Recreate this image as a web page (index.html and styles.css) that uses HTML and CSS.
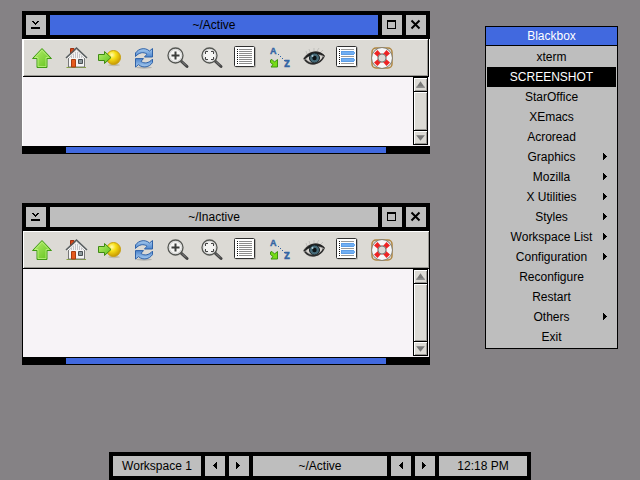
FILE: index.html
```
<!DOCTYPE html>
<html lang="en">
<head>
<meta charset="utf-8">
<title>Blackbox</title>
<link rel="stylesheet" href="styles.css">
</head>
<body>
<svg class="defs" aria-hidden="true">
  <defs>
    <linearGradient id="green" x1="0" y1="0" x2="1" y2="1"><stop offset="0" stop-color="#b8f070"/><stop offset="1" stop-color="#5ec018"/></linearGradient>
    <radialGradient id="gold" cx=".38" cy=".32" r=".7"><stop offset="0" stop-color="#fffbb0"/><stop offset=".4" stop-color="#f8e018"/><stop offset="1" stop-color="#c89800"/></radialGradient>
    <linearGradient id="blue" x1="0" y1="0" x2="0" y2="1"><stop offset="0" stop-color="#a8ccf0"/><stop offset="1" stop-color="#4c84cc"/></linearGradient>
    <symbol id="up" viewBox="0 0 22 22">
      <path d="M11 1.5 20.5 11.5H16V20.5H6V11.5H1.5Z" fill="url(#green)" stroke="#3f9a14" stroke-linejoin="round"/>
      <path d="M11 3.2 17.9 10.5H15V19.5H7V10.5H4Z" fill="none" stroke="#c4f58c" stroke-opacity=".7"/>
    </symbol>
    <symbol id="home" viewBox="0 0 22 22">
      <path d="M1.5 20.5H21" stroke="#8aa83c"/>
      <path d="M5.5 7V1.5H9V5" fill="#d84818" stroke="#a03010"/>
      <path d="M3.5 11 11.5 2.5 19.5 11V20H3.5Z" fill="#f4f4f4" stroke="#777"/>
      <path d="M6.5 9V11M8.5 7V11M10.5 5V11M12.5 5V11M14.5 7V11M16.5 9V11" stroke="#c4c4c8"/>
      <path d="M1 11 11.5 1 22 11" fill="none" stroke="#555b5e" stroke-width="1.5"/>
      <path d="M2.5 11.5 11.5 3 20.5 11.5" fill="none" stroke="#fff"/>
      <path d="M6.5 12.5H10.5V20H6.5Z" fill="#e65a1c" stroke="#a83c10"/>
      <path d="M13.5 12.5H17.5V16.5H13.5Z" fill="#8f9a9e" stroke="#4a5054"/>
    </symbol>
    <symbol id="goto" viewBox="0 0 22 22">
      <ellipse cx="15" cy="18" rx="6" ry="1.2" fill="#c0bcaa"/>
      <circle cx="14.5" cy="10.5" r="7" fill="url(#gold)" stroke="#c8a010"/>
      <path d="M-.5 7.500H5.500V4.500L12 10.500 5.500 16.500V13.500H-.5Z" fill="url(#green)" stroke="#3f8a14"/>
    </symbol>
    <symbol id="reload" viewBox="0 0 22 22">
      <ellipse cx="11" cy="20.500" rx="8" ry="1.200" fill="#b4b3af"/>
      <path id="sweep" d="M2.500 9.500V6C5.500 1.500 12 0 16.500 4L19.500 1.500V10H11.500L14 7.200C10.500 4.500 6 5.500 2.500 9.500Z" fill="url(#blue)" stroke="#2f62a8" stroke-linejoin="round"/>
      <use href="#sweep" transform="rotate(180 11 10.800)"/>
    </symbol>
    <symbol id="glass" viewBox="0 0 22 22">
      <path d="M13.500 13.500 20 19.500" stroke="#444" stroke-width="3" stroke-linecap="round"/>
      <path d="M15 14.500 19 18.500" stroke="#888"/>
      <circle cx="8.500" cy="8.500" r="7.500" fill="#f5f5f3" stroke="#555753" stroke-width="1.300"/>
      <circle cx="8.500" cy="8.500" r="6" fill="none" stroke="#ccc" stroke-width=".8"/>
    </symbol>
    <symbol id="zoom" viewBox="0 0 22 22">
      <use href="#glass" width="22" height="22"/>
      <path d="M8.500 4.500V12.500M4.500 8.500H12.500" stroke="#3c3e3c" stroke-width="2"/>
    </symbol>
    <symbol id="fit" viewBox="0 0 22 22">
      <use href="#glass" width="22" height="22"/>
      <path d="M4.500 7V4.500H7M10 4.500H12.500V7M12.500 10V12.500H10M7 12.500H4.500V10" fill="none" stroke="#444"/>
    </symbol>
    <symbol id="sheet" viewBox="0 0 22 22">
      <rect x="1.500" y="1" width="20.500" height="20.500" rx="1" fill="#b2b0ac"/>
      <rect x=".5" y=".5" width="20" height="20" rx="1" fill="#fff" stroke="#303030"/>
      <path d="M3.500 3V18" stroke="#111" stroke-dasharray="1 1"/>
    </symbol>
    <symbol id="list" viewBox="1 1 22 22">
      <use href="#sheet" width="22" height="22"/>
      <path d="M5 3.500H18M5 5.500H18M5 7.500H18M5 9.500H18M5 11.500H18M5 13.500H18M5 15.500H18M5 17.500H18" stroke="#8c8c8c"/>
    </symbol>
    <symbol id="details" viewBox="1 1 22 22">
      <use href="#sheet" width="22" height="22"/>
      <path d="M5 3.500H18M5 10.500H18M5 17.500H18" stroke="#999"/>
      <path d="M5 7H18M5 14H18" stroke="#5c9ee8" stroke-width="4"/>
      <path d="M6 7H19M6 14H19" stroke="#72aff2" stroke-width="2"/>
    </symbol>
    <symbol id="sort" viewBox="0 0 22 22">
      <text x="1" y="7" class="letter">A</text>
      <text x="15" y="20" class="letter last">z</text>
      <path d="M9 7.500H10M11 9.500H12M13 11.500H14M15 13.500H16" stroke="#3465a4"/>
      <path d="M1.500 13 3 12.500 5.500 15 8.500 12.500V20H2L4 17.500 1.500 15.500Z" fill="#78dc18" stroke="#3f9410"/>
    </symbol>
    <symbol id="eye" viewBox="0 0 22 22">
      <path d="M4 7 3 4M7 5 6 2M11 4V1M14 4 16 1M17 6 20 3" stroke="#c0bfbb"/>
      <path d="M0 12C4 4 16 1 22 9C20 16 8 22 2 14Z" fill="#888684"/>
      <path d="M1 12C5 5 15 2 21.500 9C18 5.500 8 6.500 1 12Z" fill="#181818" stroke="#222"/>
      <path d="M3 12C7 7 16 6 20 10C17 16 8 18 3 12Z" fill="#d8d5d1"/>
      <circle cx="11.500" cy="11" r="5" fill="#456a78" stroke="#152024"/>
      <circle cx="11.500" cy="11" r="2.200" fill="#0b1114"/>
      <circle cx="9.500" cy="9" r="1" fill="#b8d0d8"/>
      <path d="M2 13C8 19.500 17 17 20.500 10" fill="none" stroke="#292929" stroke-width="1.400"/>
    </symbol>
    <symbol id="help" viewBox="0 0 22 22">
      <rect x="1" y="1" width="20" height="20" rx="4" fill="none" stroke="#af8640" stroke-width="1.500"/>
      <circle cx="11" cy="11" r="7.200" fill="none" stroke="#7c7c78" stroke-width="7"/>
      <circle cx="11" cy="11" r="7.200" fill="none" stroke="#f7f7f7" stroke-width="5.500"/>
      <path d="M3 6.500 6.500 3 10 7 7 10ZM15.500 3 19 6.500 15 10 12 7ZM19 15.500 15.500 19 12 15 15 12ZM6.500 19 3 15.500 7 12 10 15Z" fill="#ee2424"/>
      <circle cx="11" cy="11" r="4" fill="#dcdad5" stroke="#7c7c78"/>
    </symbol>
    <symbol id="iconify" viewBox="0 0 20 20"><path d="M6 6H8V7H9V8H10V7H11V6H13V7H12V8H11V9H10V10H9V9H8V8H7V7H6ZM5 12H14V14H5Z"/></symbol>
    <symbol id="maximize" viewBox="0 0 20 20"><path fill-rule="evenodd" d="M5 5H14V14H5ZM6 7V13H13V7Z"/></symbol>
    <symbol id="close" viewBox="0 0 20 20"><path d="M5.500 5.500 13.500 13.500M13.500 5.500 5.500 13.500" stroke="#000" stroke-width="2"/></symbol>
    <symbol id="left" viewBox="0 0 20 20"><path d="M8 9H9V8H10V7H11V6H12V13H11V12H10V11H9V10H8Z"/></symbol>
    <symbol id="right" viewBox="0 0 20 20"><path d="M7 6H8V7H9V8H10V9H11V10H10V11H9V12H8V13H7Z"/></symbol>
    <symbol id="scroll-up" viewBox="0 0 12 12"><path d="M6 3 9.500 8H2.500Z" fill="#777"/><path d="M2 8.500H10" stroke="#777"/></symbol>
    <symbol id="scroll-down" viewBox="0 0 12 12"><path d="M2 4H10L6 9Z" fill="#777"/></symbol>
  </defs>
</svg>

<main class="desktop">
  <section class="window active" aria-label="Active window">
    <header class="bar">
      <button class="cell knob" aria-label="Iconify"><svg><use href="#iconify"/></svg></button>
      <h2 class="cell caption">~/Active</h2>
      <button class="cell knob" aria-label="Maximize"><svg><use href="#maximize"/></svg></button>
      <button class="cell knob" aria-label="Close"><svg><use href="#close"/></svg></button>
    </header>
    <div class="client">
      <nav class="tools" aria-label="Tools">
        <button class="tool" aria-label="Up"><svg><use href="#up"/></svg></button>
        <button class="tool" aria-label="Home"><svg><use href="#home"/></svg></button>
        <button class="tool" aria-label="Go to"><svg><use href="#goto"/></svg></button>
        <button class="tool" aria-label="Refresh"><svg><use href="#reload"/></svg></button>
        <button class="tool" aria-label="Zoom in"><svg><use href="#zoom"/></svg></button>
        <button class="tool" aria-label="Zoom to fit"><svg><use href="#fit"/></svg></button>
        <button class="tool" aria-label="List"><svg><use href="#list"/></svg></button>
        <button class="tool" aria-label="Sort"><svg><use href="#sort"/></svg></button>
        <button class="tool" aria-label="Hidden files"><svg><use href="#eye"/></svg></button>
        <button class="tool" aria-label="Details"><svg><use href="#details"/></svg></button>
        <button class="tool" aria-label="Help"><svg><use href="#help"/></svg></button>
      </nav>
      <div class="view">
        <div class="page"></div>
        <div class="scroll">
          <button class="step" aria-label="Scroll up"><svg><use href="#scroll-up"/></svg></button>
          <div class="thumb"></div>
          <button class="step" aria-label="Scroll down"><svg><use href="#scroll-down"/></svg></button>
        </div>
      </div>
    </div>
    <footer class="handle"><span class="grip"></span></footer>
  </section>

  <section class="window inactive" aria-label="Inactive window">
    <header class="bar">
      <button class="cell knob" aria-label="Iconify"><svg><use href="#iconify"/></svg></button>
      <h2 class="cell caption">~/Inactive</h2>
      <button class="cell knob" aria-label="Maximize"><svg><use href="#maximize"/></svg></button>
      <button class="cell knob" aria-label="Close"><svg><use href="#close"/></svg></button>
    </header>
    <div class="client">
      <nav class="tools" aria-label="Tools">
        <button class="tool" aria-label="Up"><svg><use href="#up"/></svg></button>
        <button class="tool" aria-label="Home"><svg><use href="#home"/></svg></button>
        <button class="tool" aria-label="Go to"><svg><use href="#goto"/></svg></button>
        <button class="tool" aria-label="Refresh"><svg><use href="#reload"/></svg></button>
        <button class="tool" aria-label="Zoom in"><svg><use href="#zoom"/></svg></button>
        <button class="tool" aria-label="Zoom to fit"><svg><use href="#fit"/></svg></button>
        <button class="tool" aria-label="List"><svg><use href="#list"/></svg></button>
        <button class="tool" aria-label="Sort"><svg><use href="#sort"/></svg></button>
        <button class="tool" aria-label="Hidden files"><svg><use href="#eye"/></svg></button>
        <button class="tool" aria-label="Details"><svg><use href="#details"/></svg></button>
        <button class="tool" aria-label="Help"><svg><use href="#help"/></svg></button>
      </nav>
      <div class="view">
        <div class="page"></div>
        <div class="scroll">
          <button class="step" aria-label="Scroll up"><svg><use href="#scroll-up"/></svg></button>
          <div class="thumb"></div>
          <button class="step" aria-label="Scroll down"><svg><use href="#scroll-down"/></svg></button>
        </div>
      </div>
    </div>
    <footer class="handle"><span class="grip"></span></footer>
  </section>

  <nav class="menu" aria-label="Root menu">
    <h2 class="menu-title">Blackbox</h2>
    <div class="items">
      <button class="item">xterm</button>
      <button class="item selected">SCREENSHOT</button>
      <button class="item">StarOffice</button>
      <button class="item">XEmacs</button>
      <button class="item">Acroread</button>
      <button class="item sub">Graphics<svg><use href="#right"/></svg></button>
      <button class="item sub">Mozilla<svg><use href="#right"/></svg></button>
      <button class="item sub">X Utilities<svg><use href="#right"/></svg></button>
      <button class="item sub">Styles<svg><use href="#right"/></svg></button>
      <button class="item sub">Workspace List<svg><use href="#right"/></svg></button>
      <button class="item sub">Configuration<svg><use href="#right"/></svg></button>
      <button class="item">Reconfigure</button>
      <button class="item">Restart</button>
      <button class="item sub">Others<svg><use href="#right"/></svg></button>
      <button class="item">Exit</button>
    </div>
  </nav>

  <footer class="bar taskbar">
    <span class="cell label">Workspace 1</span>
    <button class="cell knob" aria-label="Previous workspace"><svg><use href="#left"/></svg></button>
    <button class="cell knob" aria-label="Next workspace"><svg><use href="#right"/></svg></button>
    <span class="cell caption">~/Active</span>
    <button class="cell knob" aria-label="Previous window"><svg><use href="#left"/></svg></button>
    <button class="cell knob" aria-label="Next window"><svg><use href="#right"/></svg></button>
    <span class="cell label">12:18 PM</span>
  </footer>
</main>
</body>
</html>
```
FILE: styles.css
```
* { box-sizing: border-box; }

body, h2 { margin: 0; }

body, button {
  font: 12px/20px "Liberation Sans", Arial, sans-serif;
  color: #000;
}

button { border: 0; padding: 0; }

svg { display: block; width: 100%; height: 100%; }
svg, symbol { overflow: visible; }

.defs { position: absolute; width: 0; height: 0; }

.letter { font: bold 9px "Liberation Sans", Arial, sans-serif; fill: #3465a4; stroke: #3465a4; stroke-width: .4; }
.last { font-size: 12px; }

.desktop {
  position: relative;
  min-height: 100vh;
  overflow: hidden;
  background: #858285;
}

/* Title bars and the workspace toolbar share one frame */
.bar { display: flex; gap: 4px; padding: 4px; background: #000; }
.cell { height: 20px; background: #bebebe; font-size: 12px; font-weight: 400; line-height: 20px; text-align: center; }
.knob { flex: none; width: 20px; }
.caption { flex: 1; }
.label { flex: none; width: 88px; }
.active .caption { background: #4169df; }

/* Windows */
.window { position: absolute; left: 22px; width: 408px; }
.active { top: 11px; }
.inactive { top: 203px; }

.client { border: solid #fff; border-width: 0 1px; }
.inactive .client { border-color: #000; }

.tools {
  display: flex;
  gap: 12px;
  height: 38px;
  padding: 8px;
  border: solid #000;
  border-width: 0 1px 1px 0;
  background: #dcdad5;
  box-shadow: inset 1px 1px #fff, inset -1px -1px #9a9894;
}
.inactive .tools { border-right-width: 0; }
.tool { flex: none; width: 22px; height: 22px; background: none; }

.view { display: flex; height: 69px; background: #f7f3f7; }
.inactive .view { height: 88px; }
.page { flex: 1; }

.scroll {
  display: flex;
  flex-direction: column;
  gap: 1px;
  width: 15px;
  margin: 0 1px 1px 0;
  padding: 1px;
  background: #000;
}
.step, .thumb { background: #dcdad5; box-shadow: inset 1px 1px #fff, inset -1px -1px #9a9894; }
.step { flex: none; height: 13px; }
.thumb { flex: 1; }

.handle { padding: 1px 44px; background: #000; }
.grip { display: block; height: 6px; background: #4169df; }

/* Root menu */
.menu {
  position: absolute;
  top: 26px;
  left: 485px;
  width: 133px;
  border: 1px solid #000;
  background: #bebebe;
  text-align: center;
}
.menu-title {
  height: 19px;
  border-bottom: 1px solid #000;
  background: #4169df;
  color: #fff;
  font-size: 12px;
  font-weight: 400;
  line-height: 18px;
}
.items { padding: 1px; }
.item { display: block; width: 100%; height: 20px; background: none; }
.selected { background: #000; color: #fff; }
.sub { position: relative; }
.sub svg { position: absolute; top: 0; right: 0; width: 20px; }

.taskbar { position: absolute; right: 0; bottom: 0; left: 0; width: 422px; margin: 0 auto; }
```
